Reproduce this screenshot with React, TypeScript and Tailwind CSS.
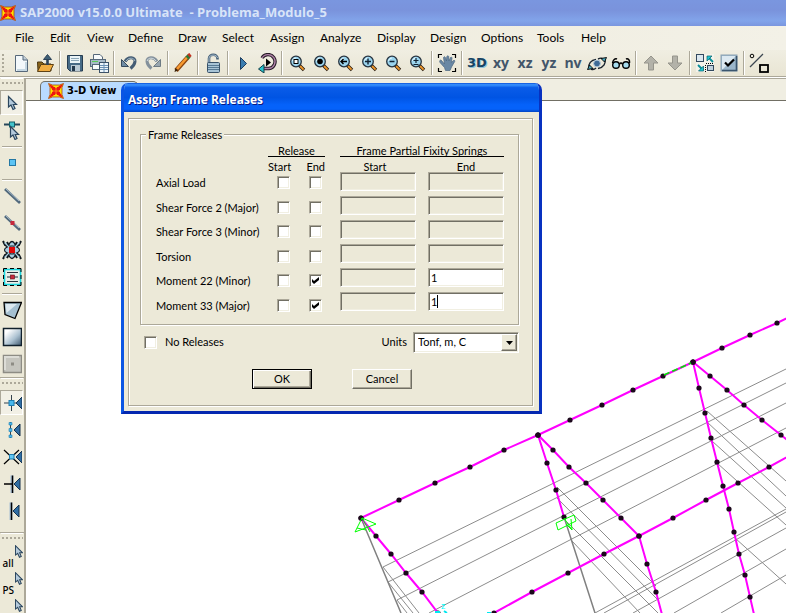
import React, { useState } from 'react';

type Pt = [number, number];
type Tool = { id: string; icon: React.ReactNode; pressed?: boolean };

const MENUS = ['File', 'Edit', 'View', 'Define', 'Draw', 'Select', 'Assign', 'Analyze', 'Display', 'Design', 'Options', 'Tools', 'Help'];

const SUNKEN = 'border border-t-[#aca899] border-l-[#aca899] border-b-white border-r-white shadow-[inset_1px_1px_0_#716f64,inset_-1px_-1px_0_#f1efe2]';
const ETCHED = 'border border-[#aca899] shadow-[1px_1px_0_#fff,inset_1px_1px_0_#fff]';

/* ---------- icons ---------- */

function Icon({ size = 20, children }: { size?: number; children: React.ReactNode }) {
  return (
    <svg width={size} height={size} viewBox="0 0 20 20" fill="none" className="block shrink-0" aria-hidden="true">
      {children}
    </svg>
  );
}

function Logo() {
  return (
    <svg width="16" height="16" viewBox="0 0 16 16" className="block shrink-0" aria-hidden="true">
      <path d="M0.500 0.500L4.500 2H11.500L15.500 0.500L14 4.500V11.500L15.500 15.500L11.500 14H4.500L0.500 15.500L2 11.500V4.500Z" fill="#ffe000" stroke="#a8480c" strokeWidth="0.800" />
      <path d="M1 1L5 3L7 5.500H9L11 3L15 1L13 5L10.500 7V9L13 11L15 15L11 13L9 10.500H7L5 13L1 15L3 11L5.500 9V7L3 5Z" fill="#ee1410" />
      <path d="M4 4H12V12H4Z" fill="#ee1410" />
      <path d="M8 2.500L9 5H7ZM8 13.500L7 11H9ZM2.500 8L5 7V9ZM13.500 8L11 9V7Z" fill="#ffe000" />
      <path d="M8 5V11M5 8H11" stroke="#ff9c18" strokeWidth="0.800" />
    </svg>
  );
}

function Magnifier({ children }: { children?: React.ReactNode }) {
  return (
    <Icon>
      <path d="M12 12L17 17" stroke="#2a1c10" strokeWidth="3.400" />
      <path d="M13 13L16.600 16.600" stroke="#f0982c" strokeWidth="1.800" />
      <circle cx="9" cy="8.500" r="5.300" fill="#9bd4ee" stroke="#26323e" strokeWidth="1.300" />
      <path d="M5.500 8A3.500 3.500 0 0 1 9 5" stroke="#e6f8ff" strokeWidth="1" />
      {children}
    </Icon>
  );
}

function Cursor({ x = 0, y = 0 }: { x?: number; y?: number }) {
  return (
    <path
      transform={`translate(${x} ${y})`}
      d="M0.500 0.500V11L3 9L5 13.500L7 12.500L5.200 8.500H8.500Z"
      fill="#b4cadc"
      stroke="#2b465e"
      strokeWidth="1.200"
    />
  );
}

function PlaneLabel({ children }: { children: string }) {
  return <span className="font-['Open_Sans',sans-serif] text-[14px] leading-5 font-bold text-[#43566a]">{children}</span>;
}

const BlueArrow = ({ x }: { x: number }) => (
  <path d={`M${x} 10L${x + 6} 4V16Z`} fill="#2f6da3" stroke="#16324e" strokeWidth="1" />
);

const TOP_TOOLS: Tool[][] = [
  [
    {
      id: 'New',
      icon: (
        <Icon>
          <path d="M4.500 2.500H12L16.500 7V18.500H4.500Z" fill="#f3f8fb" stroke="#56687a" />
          <path d="M12 2.500V7H16.500" fill="#c3d0da" stroke="#56687a" />
          <path d="M15 9V17H6" stroke="#c5d7e2" strokeWidth="2" />
        </Icon>
      ),
    },
    {
      id: 'Open',
      icon: (
        <Icon>
          <path d="M2.500 9H7L9 11H16V18H3Z" fill="#8a6418" stroke="#4a3510" />
          <path d="M6 11.500H18.500L15 18.500H2.500Z" fill="#f0ad42" stroke="#5e4214" />
          <path d="M12.500 12V5" stroke="#2c4258" strokeWidth="2.600" />
          <path d="M8.500 6.500L12.500 1.500L16.500 6.500Z" fill="#3f6078" stroke="#2c4258" />
        </Icon>
      ),
    },
  ],
  [
    {
      id: 'Save',
      icon: (
        <Icon>
          <path d="M2.500 2.500H17.500V18H5L2.500 15.500Z" fill="#466a86" stroke="#263d52" />
          <rect x="5" y="3" width="10" height="7" fill="#e9f3f7" />
          <path d="M6 5.500H14M6 7.500H14" stroke="#8ba6b8" />
          <rect x="6" y="12" width="9" height="6" fill="#b9c9d4" />
          <rect x="7" y="13" width="3" height="5" fill="#22384c" />
        </Icon>
      ),
    },
    {
      id: 'Print',
      icon: (
        <Icon>
          <path d="M4.500 7V1.500H11L13.500 4V7" fill="#f8fbfc" stroke="#56687a" />
          <rect x="1.500" y="6.500" width="15" height="7" fill="#a9bbc8" stroke="#56687a" />
          <path d="M3 8.500H9" stroke="#58c858" />
          <rect x="3.500" y="11.500" width="7" height="5" fill="#f8fbfc" stroke="#56687a" />
          <rect x="10.500" y="9.500" width="9" height="10" fill="#eef6fb" stroke="#3c5268" />
          <path d="M11 12.500H19M11 14.500H19M11 16.500H19M15 10V19" stroke="#6d92b4" />
        </Icon>
      ),
    },
  ],
  [
    {
      id: 'Undo',
      icon: (
        <Icon>
          <path d="M6 8.500C9 3 16.500 4 16 8.500C15.700 11.500 14 13.500 11.500 15.500" stroke="#445c74" strokeWidth="3" />
          <path d="M7 8C9.500 4 15.500 4.500 15.800 8" stroke="#a5bccb" strokeWidth="1" />
          <path d="M2.500 6.500V13.500H9.500Z" fill="#6f8ca4" stroke="#36495c" />
        </Icon>
      ),
    },
    {
      id: 'Redo',
      icon: (
        <Icon>
          <path d="M14 8.500C11 3 3.500 4 4 8.500C4.300 11.500 6 13.500 8.500 15.500" stroke="#84919c" strokeWidth="3" />
          <path d="M13 8C10.500 4 4.500 4.500 4.200 8" stroke="#d5dfe4" strokeWidth="1" />
          <path d="M17.500 6.500V13.500H10.500Z" fill="#98a6b0" stroke="#6d7a84" />
        </Icon>
      ),
    },
  ],
  [
    {
      id: 'Edit line',
      icon: (
        <Icon>
          <path d="M3 17.500L15 4" stroke="#8a4510" strokeWidth="4.500" />
          <path d="M4 16L14.500 4" stroke="#f79a30" strokeWidth="2.600" />
          <path d="M14 5L16.500 2.500" stroke="#2a7a38" strokeWidth="4" />
          <path d="M15.500 3L17.500 1.500" stroke="#c43020" strokeWidth="4" />
          <path d="M1.500 19L2.500 15L5 17.500Z" fill="#3a2208" />
        </Icon>
      ),
    },
  ],
  [
    {
      id: 'Unlock',
      icon: (
        <Icon>
          <path d="M6 10V5.500C6 0.500 14.500 0.500 14.500 5.500V6.500" stroke="#466078" strokeWidth="2.600" />
          <path d="M6 9V5.500C6 1 14 1 14.500 5" stroke="#c5d8e5" strokeWidth="0.800" />
          <rect x="4.500" y="9.500" width="12" height="10" rx="1" fill="#a8c4d6" stroke="#385168" />
          <path d="M5 12.500H16M5 14.500H16M5 16.500H16" stroke="#577a94" />
        </Icon>
      ),
    },
  ],
  [
    { id: 'Run', icon: <Icon><path d="M7.500 4.500L13.500 10.500L7.500 16.500Z" fill="#3b7db0" stroke="#1c3d60" /></Icon> },
    {
      id: 'Refresh',
      icon: (
        <Icon>
          <path d="M5 5A7 7 0 1 1 12 15.500H5" stroke="#281c28" strokeWidth="3.400" />
          <path d="M5 5A7 7 0 1 1 12 15.500H5" stroke="#b083a8" strokeWidth="1.300" />
          <path d="M9 5.500L14 9.500L9 13.500Z" fill="#000" />
          <path d="M7 11.500V20L1.500 16Z" fill="#27c5cf" stroke="#123c46" />
        </Icon>
      ),
    },
  ],
  [
    { id: 'Rubber band zoom', icon: <Magnifier><rect x="7" y="6.500" width="4" height="4" fill="#fff" stroke="#000" /></Magnifier> },
    { id: 'Full view', icon: <Magnifier><circle cx="9" cy="8.500" r="2.800" fill="#000" /></Magnifier> },
    { id: 'Previous zoom', icon: <Magnifier><path d="M6 8.500H12M8.500 6L6 8.500L8.500 11" stroke="#000" strokeWidth="1.400" /></Magnifier> },
    { id: 'Zoom in', icon: <Magnifier><path d="M6 8.500H12M9 5.500V11.500" stroke="#123" strokeWidth="1.400" /></Magnifier> },
    { id: 'Zoom out', icon: <Magnifier><path d="M6.500 8.500H11.500" stroke="#123" strokeWidth="1.500" /></Magnifier> },
    { id: 'Zoom step', icon: <Magnifier><path d="M6.500 7.500H11.500M9 5V10M6.500 11.500H11.500" stroke="#123" strokeWidth="1.200" /></Magnifier> },
  ],
  [
    {
      id: 'Pan',
      icon: (
        <Icon>
          <path d="M1.500 5V1.500H5M15 1.500H18.500V5M18.500 15V18.500H15M5 18.500H1.500V15" stroke="#000" strokeWidth="1.200" />
          <path d="M4 7L7.500 11L6.500 4.500C7 3.500 8 3.500 8.400 4.500L9.500 8L9.800 3.500C10.500 2.500 11.500 2.800 11.700 3.500L12 8L13.500 4.500C14.300 3.800 15.200 4.300 15 5.200L14.300 9.500L16.500 7.500C17.500 7 18.200 7.800 17.600 8.700L14.500 14L13 17.500H8.500L7.500 14.500L3 9.500C2.200 7.800 3 7 4 7Z" fill="#6a88a4" stroke="#4a6680" strokeWidth="0.700" />
        </Icon>
      ),
    },
  ],
  [
    {
      id: '3-D view',
      icon: <span className="font-['DejaVu_Sans',sans-serif] text-[13px] leading-5 font-bold text-[#174463] [text-shadow:1px_1px_0_#8fc3d8]">3D</span>,
    },
    { id: 'XY view', icon: <PlaneLabel>xy</PlaneLabel> },
    { id: 'XZ view', icon: <PlaneLabel>xz</PlaneLabel> },
    { id: 'YZ view', icon: <PlaneLabel>yz</PlaneLabel> },
    { id: 'NV view', icon: <PlaneLabel>nv</PlaneLabel> },
    {
      id: 'Rotate view',
      icon: (
        <Icon>
          <path d="M2 15C1 11 4 7 9 6.500M18 6C19 10 17 14.500 11 15.500M4 16C6 17 8 16 9 15M11 6C13 5 15 5 16 6" stroke="#1b2530" strokeWidth="1.400" />
          <circle cx="10" cy="10.500" r="3.400" fill="#3e6a96" stroke="#b9cede" />
          <path d="M14 5.500L19.500 4.500L17.500 9ZM6 15.500L0.500 16.500L2.500 12Z" fill="#4aa9bf" stroke="#000" strokeWidth="0.900" />
        </Icon>
      ),
    },
    {
      id: 'Perspective',
      icon: (
        <Icon>
          <path d="M1.500 10C2 7 4 5 6 6M18.500 10C19 7 17 5 15 6M8.500 11C9.500 9.500 10.500 9.500 11.500 11" stroke="#000" strokeWidth="1.500" />
          <circle cx="5" cy="12" r="3.300" fill="#a7dced" stroke="#000" strokeWidth="1.400" />
          <circle cx="15" cy="12" r="3.300" fill="#a7dced" stroke="#000" strokeWidth="1.400" />
        </Icon>
      ),
    },
  ],
  [
    { id: 'Move up', icon: <Icon><path d="M10 3L17 10H12.500V17H7.500V10H3Z" fill="#b3b2a9" stroke="#96958c" /></Icon> },
    { id: 'Move down', icon: <Icon><path d="M10 17L3 10H7.500V3H12.500V10H17Z" fill="#b3b2a9" stroke="#96958c" /></Icon> },
  ],
  [
    {
      id: 'Object shrink',
      icon: (
        <Icon>
          <rect x="1" y="1" width="18" height="18" fill="#f3f2ea" />
          <rect x="1.500" y="1.500" width="7" height="7" fill="#dbe7ef" stroke="#32485e" />
          <rect x="12.500" y="12.500" width="6" height="5" fill="#c0d2de" stroke="#32485e" />
          <path d="M18 9L13 4M3 12L8 17" stroke="#0a8d98" strokeWidth="1.800" />
          <path d="M12 8V3H17ZM8.500 13V18H3.500Z" fill="#21c5d2" stroke="#075e68" strokeWidth="0.700" />
          <path d="M10.500 12V19M11 10.500H19" stroke="#000" strokeDasharray="1 1" />
        </Icon>
      ),
    },
    {
      id: 'Display options',
      icon: (
        <Icon>
          <rect x="2" y="2" width="16" height="16" fill="#9bb6ca" stroke="#8ba1b2" />
          <path d="M3 17V3H17Z" fill="#dce9f1" />
          <path d="M17.500 3V17.500H3" stroke="#3b566e" strokeWidth="1.600" />
          <path d="M6 9.500L9 12.500L15 6.500" stroke="#000" strokeWidth="2.200" />
        </Icon>
      ),
    },
  ],
  [
    {
      id: 'Assign joint',
      icon: (
        <Icon>
          <circle cx="3" cy="3" r="1.800" stroke="#000" />
          <path d="M1 14L14 1" stroke="#3b4650" strokeWidth="1.200" />
          <rect x="11" y="12" width="8" height="7" stroke="#000" strokeWidth="1.800" />
        </Icon>
      ),
    },
  ],
];

const SIDE_TOOLS: Tool[][] = [
  [
    { id: 'Pointer', pressed: true, icon: <Icon><Cursor x={6} y={3} /></Icon> },
    {
      id: 'Reshape',
      icon: (
        <Icon>
          <path d="M2 4.500H18" stroke="#26465a" strokeWidth="2" />
          <rect x="7.500" y="2" width="5" height="5" fill="#43c3cc" stroke="#14606a" />
          <Cursor x={8} y={6} />
        </Icon>
      ),
    },
  ],
  [{ id: 'Joint', icon: <Icon><rect x="7.500" y="6.500" width="6" height="6" fill="#5cc4f4" stroke="#2478a4" /></Icon> }],
  [
    {
      id: 'Frame',
      icon: (
        <Icon>
          <path d="M3 3L18 17" stroke="#51697c" strokeWidth="2.800" />
          <path d="M3.500 2.500L17 15" stroke="#a9bcca" strokeWidth="1" />
        </Icon>
      ),
    },
    {
      id: 'Quick frame',
      icon: (
        <Icon>
          <path d="M3 3L18 17" stroke="#51697c" strokeWidth="2.800" />
          <path d="M3.500 2.500L17 15" stroke="#a9bcca" strokeWidth="1" />
          <rect x="8.500" y="8" width="4" height="4" fill="#c7283c" />
        </Icon>
      ),
    },
    {
      id: 'Braces',
      icon: (
        <Icon>
          <path d="M1 1L3 5L7 7M19 1L17 5L13 7M1 19L3 15L7 13M19 19L17 15L13 13M5 2L7 6M15 2L13 6M5 18L7 14M15 18L13 14" stroke="#0d151c" strokeWidth="2" />
          <ellipse cx="10" cy="10" rx="4" ry="8.500" fill="#a9cfe2" stroke="#0d151c" strokeWidth="1.300" />
          <ellipse cx="10" cy="10" rx="7.500" ry="4" fill="#a9cfe2" stroke="#0d151c" strokeWidth="1.100" />
          <path d="M2.500 2.500L8 8M17.500 2.500L12 8M2.500 17.500L8 12M17.500 17.500L12 12" stroke="#a9cfe2" strokeWidth="1.200" />
          <rect x="7" y="7" width="6" height="6" fill="#e00808" />
        </Icon>
      ),
    },
    {
      id: 'Secondary beams',
      icon: (
        <Icon>
          <rect x="2.500" y="2.500" width="16" height="15" fill="#e8efe8" stroke="#18d4dc" strokeWidth="1.600" />
          <path d="M1.500 5V1.500H5M8 1.500H12M15 1.500H19V5M19 8V12M19 15V18.500H15M12 18.500H8M5 18.500H1.500V15M1.500 12V8" stroke="#000" />
          <path d="M5 5.500H16M5 14.500H16M5 10H16" stroke="#26333e" strokeWidth="1.200" />
          <rect x="8.500" y="8" width="4" height="4" fill="#c7283c" stroke="#601018" strokeWidth="0.600" />
        </Icon>
      ),
    },
  ],
  [
    {
      id: 'Poly area',
      icon: (
        <Icon>
          <path d="M2 2.500H19.500L13 18.500L3 14.500Z" fill="#a5c0d1" stroke="#000" strokeWidth="1.300" />
          <path d="M3.500 4H15L4.500 13Z" fill="#dde9f0" />
        </Icon>
      ),
    },
    {
      id: 'Rectangular area',
      icon: (
        <Icon>
          <rect x="1.500" y="1.500" width="18" height="17" fill="url(#tileBlue)" stroke="#10202c" strokeWidth="1.500" />
        </Icon>
      ),
    },
    {
      id: 'Quick area',
      icon: (
        <Icon>
          <rect x="1.500" y="1.500" width="18" height="17" fill="#c5c5be" stroke="#8d8c84" strokeWidth="1.500" />
          <path d="M3 16V3H17" stroke="#dcdcd6" strokeWidth="2" />
          <rect x="9" y="8.500" width="3" height="3" fill="#8d8c84" />
        </Icon>
      ),
    },
  ],
];

const SNAP_TOOLS: Tool[] = [
  {
    id: 'Snap to joints',
    pressed: true,
    icon: (
      <Icon>
        <path d="M9.500 2V18M2 10H16" stroke="#33424e" />
        <rect x="7" y="7.500" width="5" height="5" fill="#48b8ee" stroke="#1f7db0" />
        <BlueArrow x={14} />
      </Icon>
    ),
  },
  {
    id: 'Snap to midpoints',
    icon: (
      <Icon>
        <path d="M8.500 2V18" stroke="#33424e" />
        <path d="M7 2.500H10V5H7ZM7 8.500H10V11.500H7ZM7 15H10V17.500H7Z" fill="#48b8ee" stroke="#1f7db0" strokeWidth="0.600" />
        <BlueArrow x={12} />
      </Icon>
    ),
  },
  {
    id: 'Snap to intersections',
    icon: (
      <Icon>
        <path d="M2 3L17 17M2 17L17 3" stroke="#000" strokeWidth="1.200" />
        <rect x="7.500" y="7.500" width="4.500" height="4.500" fill="#63c8f2" stroke="#1f7db0" />
        <BlueArrow x={14} />
      </Icon>
    ),
  },
  {
    id: 'Snap to perpendicular',
    icon: (
      <Icon>
        <path d="M10 1.500V19" stroke="#a7bed4" strokeWidth="3" />
        <path d="M10.500 1.500V19M2 10H10" stroke="#000" strokeWidth="1.500" />
        <BlueArrow x={12} />
      </Icon>
    ),
  },
  {
    id: 'Snap to lines',
    icon: (
      <Icon>
        <path d="M9 1.500V19" stroke="#a7bed4" strokeWidth="3" />
        <path d="M9.500 1.500V19" stroke="#000" strokeWidth="1.500" />
        <BlueArrow x={11} />
      </Icon>
    ),
  },
];

function SelectIcon({ label }: { label?: string }) {
  return (
    <span className="relative flex h-[26px] w-[22px] items-end justify-start pl-[2px] font-['Noto_Sans',sans-serif] text-[10px] leading-4 font-medium text-black">
      {label}
      <svg width="8" height="13" viewBox="0 0 9 14" className="absolute top-0 right-0" aria-hidden="true">
        <Cursor />
      </svg>
    </span>
  );
}

const SELECT_TOOLS: Tool[] = [
  { id: 'Select all', icon: <SelectIcon label="all" /> },
  { id: 'Previous selection', icon: <SelectIcon label="PS" /> },
  { id: 'Clear selection', icon: <SelectIcon /> },
];

/* ---------- bars ---------- */

function MenuBar() {
  return (
    <nav className="grid h-6 grid-cols-[35px_37px_41px_50px_44px_48px_50px_57px_53px_51px_56px_44px_40px] items-center bg-gradient-to-r from-[#ece9d8] to-[#f3f1e7] pl-[15px] font-['Lato',sans-serif] text-[12px]">
      {MENUS.map((m) => (
        <button key={m} type="button" className="text-left">
          {m}
        </button>
      ))}
    </nav>
  );
}

function TopToolbar() {
  return (
    <div className="flex h-[27px] items-center border-b border-[#aca899] bg-gradient-to-b from-[#f0eee2] to-[#e9e5d3]">
      <span className="ml-px h-5 w-2 shrink-0 bg-[radial-gradient(circle_at_2px_2px,#aca899_1px,transparent_1px)] bg-[length:8px_4px]" />
      {TOP_TOOLS.map((group, i) => (
        <React.Fragment key={group[0].id}>
          {i > 0 && <span className="mx-[2px] h-6 w-[2px] shrink-0 border-l border-[#aca899] bg-white" />}
          {group.map((t) => (
            <button key={t.id} type="button" aria-label={t.id} className="flex h-6 w-6 shrink-0 items-center justify-center">
              {t.icon}
            </button>
          ))}
        </React.Fragment>
      ))}
    </div>
  );
}

function Grip() {
  return <span className="mx-px h-[11px] shrink-0 border-t border-white bg-[radial-gradient(circle_at_2px_4px,#aca899_1px,transparent_1px)] bg-[length:4px_11px]" />;
}

function SideButton({ tool }: { tool: Tool }) {
  return (
    <button
      type="button"
      aria-label={tool.id}
      className={
        tool.pressed
          ? 'my-px flex h-[25px] w-[23px] shrink-0 items-center justify-center border border-t-[#aca899] border-r-white border-b-white border-l-[#aca899] bg-[#f2f0e6]'
          : 'flex h-[27px] w-[23px] shrink-0 items-center justify-center'
      }
    >
      {tool.icon}
    </button>
  );
}

function SideToolbar() {
  return (
    <aside className="flex w-[26px] shrink-0 flex-col overflow-hidden border-r-2 border-[#aca899] bg-[#ece9d8]">
      <svg width="0" height="0" className="absolute" aria-hidden="true">
        <defs>
          <linearGradient id="tileBlue" x1="0" y1="0" x2="1" y2="1">
            <stop offset="0.2" stopColor="#ffffff" />
            <stop offset="0.6" stopColor="#aac0d0" />
            <stop offset="1" stopColor="#3d566c" />
          </linearGradient>
        </defs>
      </svg>
      <Grip />
      {SIDE_TOOLS.map((group, i) => (
        <React.Fragment key={group[0].id}>
          {i > 0 && <span className="mx-[2px] mt-[3px] mb-px h-[2px] shrink-0 border-t border-[#aca899] bg-white" />}
          {group.map((t) => <SideButton key={t.id} tool={t} />)}
        </React.Fragment>
      ))}
      <span className="h-px shrink-0 bg-[#aca899]" />
      <Grip />
      {SNAP_TOOLS.map((t) => <SideButton key={t.id} tool={t} />)}
      <span className="mt-2 h-px shrink-0 bg-[#aca899]" />
      <Grip />
      {SELECT_TOOLS.map((t) => <SideButton key={t.id} tool={t} />)}
    </aside>
  );
}

/* ---------- structural model ---------- */

const CHAINS: Pt[][] = [
  [[361, 518], [399, 500], [435, 483], [470, 467], [504, 450], [538, 435], [570, 420], [602, 405], [633, 390], [663, 376], [693, 362], [722, 348], [750, 335], [777, 323], [800, 312]],
  [[361, 518], [376, 536], [391, 554], [406, 573], [422, 592], [438, 613]],
  [[538, 435], [547, 463], [556, 490], [564, 517]],
  [[538, 435], [553, 450], [569, 467], [586, 483], [603, 500], [621, 518], [639, 536], [647, 564], [656, 592], [664, 622]],
  [[494, 613], [532, 592], [568, 573], [604, 554], [639, 536], [673, 518], [706, 500], [738, 483], [769, 467], [800, 450]],
  [[693, 362], [699, 388], [705, 413], [711, 438], [717, 462], [723, 486], [729, 509], [734, 532], [739, 554], [745, 575], [750, 597], [756, 623]],
  [[693, 362], [710, 376], [727, 390], [744, 405], [762, 420], [781, 435], [800, 450]],
];

const GRID_LINES: [number, number, number, number][] = [
  [383, 567, 786, 369], [388, 582, 786, 383], [397, 600, 786, 403], [429, 613, 786, 428],
  [595, 613, 786, 509], [604, 613, 786, 512], [633, 613, 786, 528], [674, 613, 786, 549], [721, 613, 786, 575],
  [707, 411, 786, 481], [706, 421, 786, 496], [712, 441, 786, 508], [717, 463, 786, 525], [735, 538, 786, 584],
  [557, 487, 656, 586], [557, 498, 657, 599], [567, 522, 658, 613], [572, 541, 640, 613],
  [383, 567, 419, 613], [388, 582, 413, 613], [397, 600, 407, 613],
];

function ModelView() {
  return (
    <svg viewBox="26 101 760 512" className="block w-full" role="img" aria-label="3-D View">
      <g stroke="#8c8c8c" strokeWidth="1">
        {GRID_LINES.map(([x1, y1, x2, y2], i) => (
          <line key={i} x1={x1} y1={y1} x2={x2} y2={y2} />
        ))}
      </g>
      <path d="M361 518L401 613M564 517L595 613" stroke="#808080" strokeWidth="1.500" />
      {CHAINS.map((c, i) => (
        <polyline key={i} points={c.map((p) => p.join(',')).join(' ')} fill="none" stroke="#ff00ff" strokeWidth="2" />
      ))}
      {CHAINS.flat().map(([x, y], i) => (
        <circle key={i} cx={x} cy={y} r="2.600" fill="#1c081c" />
      ))}
      <path d="M664 375L691 363" stroke="#00e800" strokeWidth="1.600" strokeDasharray="6 3" />
      <path d="M362 518L355 532L376 524ZM362 518L370 532M357 528L366 530M556 523L574 515L576 521L558 530ZM564 518L572 530M566 524L572 530L571 519" fill="none" stroke="#00ff00" strokeWidth="1" />
      <text x="441" y="609" fill="#00ffff" className="font-['Liberation_Sans',sans-serif] text-[9px]">z</text>
      <path d="M435 612H440M444 611L447 613M487 613H491" stroke="#00e8f0" strokeWidth="2" />
    </svg>
  );
}

/* ---------- dialog ---------- */

type Release = { name: string; start: boolean; end: boolean; startSpring: string; endSpring: string };

const RELEASES: Release[] = [
  { name: 'Axial Load', start: false, end: false, startSpring: '', endSpring: '' },
  { name: 'Shear Force 2 (Major)', start: false, end: false, startSpring: '', endSpring: '' },
  { name: 'Shear Force 3 (Minor)', start: false, end: false, startSpring: '', endSpring: '' },
  { name: 'Torsion', start: false, end: false, startSpring: '', endSpring: '' },
  { name: 'Moment 22 (Minor)', start: false, end: true, startSpring: '', endSpring: '1' },
  { name: 'Moment 33 (Major)', start: false, end: true, startSpring: '', endSpring: '1' },
];

function Check({ id, label, checked, onChange }: { id?: string; label?: string; checked: boolean; onChange: (v: boolean) => void }) {
  return (
    <span className="relative block h-[13px] w-[13px]">
      <input
        id={id}
        type="checkbox"
        aria-label={label}
        checked={checked}
        onChange={(e) => onChange(e.target.checked)}
        className={`block h-[13px] w-[13px] appearance-none bg-white ${SUNKEN}`}
      />
      {checked && (
        <svg width="13" height="13" viewBox="0 0 13 13" className="pointer-events-none absolute inset-0" aria-hidden="true">
          <path d="M3 5L5 7L10 3V6L5 10L3 8Z" fill="#000" />
        </svg>
      )}
    </span>
  );
}

function ReleasesDialog() {
  const [rows, setRows] = useState(RELEASES);
  const [noReleases, setNoReleases] = useState(false);

  const update = (i: number, patch: Partial<Release>) =>
    setRows((prev) => prev.map((r, n) => (n === i ? { ...r, ...patch } : r)));

  return (
    <section
      role="dialog"
      aria-labelledby="dlg-title"
      className="absolute top-[83px] left-[121px] w-[421px] overflow-hidden rounded-t-[7px] border-r-[3px] border-b-[3px] border-l-[3px] border-r-[#0831c0] border-b-[#0428b0] border-l-[#0a55e4] bg-[#ece9d8] font-['Lato',sans-serif]"
    >
      <h2
        id="dlg-title"
        className="-mx-[3px] flex h-[29px] items-center bg-[linear-gradient(180deg,#0a50d8_0%,#3a94ff_6%,#0a5ce8_16%,#0054e3_50%,#0562fa_75%,#0562fa_90%,#0345c4_100%)] pt-1 pl-[7px] font-['Open_Sans',sans-serif] text-[12px] font-bold text-white [text-shadow:1px_1px_0_#0a1883]"
      >
        Assign Frame Releases
      </h2>

      <div className="px-1 pt-[6px] pb-[5px]">
        <div className={`mr-[2px] pr-[13px] pb-4 pl-[11px] ${ETCHED}`}>
          <fieldset className={`relative mt-[15px] h-[191px] pt-[11px] pl-[15px] ${ETCHED}`}>
            <legend className="absolute -top-[7px] left-[5px] bg-[#ece9d8] px-[2px] leading-[14px]">Frame Releases</legend>
            <div className="flex">
              <div className="w-[184px]">
                <div className="ml-[112px] w-[57px] border-b border-black text-center leading-[10px]">Release</div>
                <div className="mt-[3px] ml-[112px] flex w-[57px] justify-between leading-[14px]">
                  <span>Start</span>
                  <span>End</span>
                </div>
                <div className="mt-[2px] grid h-[136px] grid-cols-[121px_32px_13px] content-between items-center">
                  {rows.map((r, i) => (
                    <React.Fragment key={r.name}>
                      <span className="leading-[13px]">{r.name}</span>
                      <Check label={`${r.name} start`} checked={r.start} onChange={(v) => update(i, { start: v })} />
                      <Check label={`${r.name} end`} checked={r.end} onChange={(v) => update(i, { end: v })} />
                    </React.Fragment>
                  ))}
                </div>
              </div>
              <div className="w-[164px]">
                <div className="border-b border-black text-center leading-[10px] whitespace-nowrap">Frame Partial Fixity Springs</div>
                <div className="mt-[3px] grid grid-cols-[76px_76px] gap-x-3 gap-y-[5px]">
                  <span className="-mb-[7px] pr-[6px] text-center leading-[14px]">Start</span>
                  <span className="-mb-[7px] text-center leading-[14px]">End</span>
                  {rows.map((r, i) => (
                    <React.Fragment key={r.name}>
                      <input
                        type="text"
                        aria-label={`${r.name} start spring`}
                        value={r.startSpring}
                        disabled={!r.start}
                        onChange={(e) => update(i, { startSpring: e.target.value })}
                        className={`block h-[19px] w-[76px] bg-white px-[3px] disabled:bg-[#ece9d8] ${SUNKEN}`}
                      />
                      <span className="relative block">
                        <input
                          type="text"
                          aria-label={`${r.name} end spring`}
                          value={r.endSpring}
                          disabled={!r.end}
                          onChange={(e) => update(i, { endSpring: e.target.value })}
                          className={`block h-[19px] w-[76px] bg-white px-[2px] disabled:bg-[#ece9d8] ${SUNKEN}`}
                        />
                        {i === rows.length - 1 && <span className="absolute top-[3px] left-[9px] h-[13px] w-px bg-black" />}
                      </span>
                    </React.Fragment>
                  ))}
                </div>
              </div>
            </div>
          </fieldset>

          <div className="mt-[7px] flex h-[21px] items-center pl-1">
            <Check id="no-releases" checked={noReleases} onChange={setNoReleases} />
            <label htmlFor="no-releases" className="ml-2">No Releases</label>
            <label htmlFor="units" className="mr-[6px] ml-auto">Units</label>
            <div className="relative">
              <select id="units" defaultValue="Tonf, m, C" className={`block h-[21px] w-[106px] appearance-none bg-white pl-1 ${SUNKEN}`}>
                <option>Tonf, m, C</option>
                <option>KN, m, C</option>
                <option>Kgf, m, C</option>
              </select>
              <span className="pointer-events-none absolute top-[2px] right-[2px] flex h-[17px] w-4 items-center justify-center border border-t-white border-r-[#716f64] border-b-[#716f64] border-l-white bg-[#ece9d8] shadow-[inset_-1px_-1px_0_#aca899]">
                <svg width="7" height="4" viewBox="0 0 7 4" aria-hidden="true"><path d="M0 0H7L3.500 4Z" fill="#000" /></svg>
              </span>
            </div>
          </div>

          <div className="mt-4 flex gap-10 pl-28">
            <button type="button" className="h-5 w-[60px] border border-black shadow-[inset_1px_1px_0_#fff,inset_-1px_-1px_0_#716f64,inset_-2px_-2px_0_#aca899]">
              OK
            </button>
            <button type="button" className="h-5 w-[60px] border border-t-white border-r-[#716f64] border-b-[#716f64] border-l-white shadow-[inset_-1px_-1px_0_#aca899]">
              Cancel
            </button>
          </div>
        </div>
      </div>
    </section>
  );
}

export default function App() {
  return (
    <div className="relative flex h-screen flex-col overflow-hidden bg-[#ece9d8] font-['Liberation_Sans',Arial,sans-serif] text-[11px] text-black">
      <header className="flex h-[26px] shrink-0 items-center gap-1 bg-[linear-gradient(180deg,#7a96df_0%,#7a93dc_40%,#82a4ea_80%,#7a96df_100%)]">
        <Logo />
        <h1 className="font-['Open_Sans',sans-serif] text-[13px] font-bold whitespace-pre text-[#d8e4f8]">
          SAP2000 v15.0.0 Ultimate{'  '}- Problema_Modulo_5
        </h1>
      </header>
      <MenuBar />
      <TopToolbar />
      <div className="flex min-h-0 flex-1 border-t border-white">
        <SideToolbar />
        <main className="flex min-w-0 flex-1 flex-col border-t border-[#aca899] bg-white">
          <div className="flex h-[22px] shrink-0 items-end border-b border-[#716f64] bg-[#f0eee2] pl-[14px]">
            <button type="button" className="flex h-[19px] w-[98px] items-center gap-[3px] rounded-t-[5px] border border-b-0 border-[#716f64] bg-[#b9dbff] pl-[7px] font-['DejaVu_Sans_Condensed','DejaVu_Sans',sans-serif] text-[11px] font-bold whitespace-nowrap">
              <Logo />
              3-D View
            </button>
          </div>
          <ModelView />
        </main>
      </div>
      <ReleasesDialog />
    </div>
  );
}
